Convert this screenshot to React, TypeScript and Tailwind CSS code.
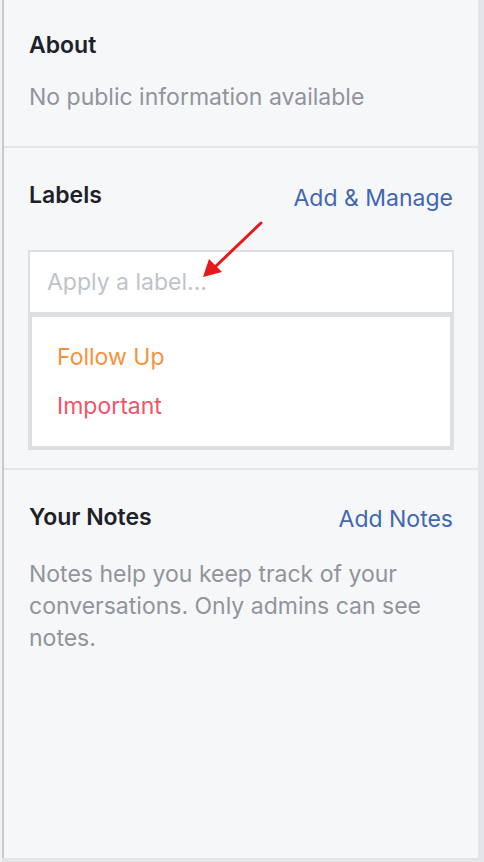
export default function App() {
  return (
    <div
      className="flex w-[484px] h-[862px] bg-[#e4e5e9] text-[23px]"
      style={{ fontFamily: "Inter, 'Noto Sans', sans-serif" }}
    >
      <div className="w-[2px] bg-[#f2f3f5]" />
      <div className="flex flex-col w-[476px] h-[858px] bg-[#f6f7f9] border-l-2 border-[#c9cacd]">
        {/* About */}
        <section className="px-[25px] pt-[33px] pb-[37px]">
          <h2 className="leading-6 font-semibold text-[#1d2129]">About</h2>
          <p className="mt-7 leading-6 text-[#90949c]">No public information available</p>
        </section>
        <div className="h-[2px] bg-[#e5e6e9]" />

        {/* Labels */}
        <section className="relative px-[25px] pt-[35px] pb-[18px]">
          <div className="flex items-start justify-between">
            <h2 className="leading-6 font-semibold text-[#1d2129]">Labels</h2>
            <a className="pt-[3px] leading-6 text-[#4267b2]">Add &amp; Manage</a>
          </div>
          <div className="-mx-[1px] mt-[40px]">
            <div className="flex items-center h-[63px] bg-white border-2 border-b-[1px] border-[#dddfe2] px-[17px]">
              <span className="text-[#bec3c9]">Apply a label...</span>
            </div>
            <div className="flex flex-col gap-[25px] bg-white border-4 border-[#dddfe2] px-[25px] py-7">
              <span className="leading-6 text-[#f7923b]">Follow Up</span>
              <span className="leading-6 text-[#f35369]">Important</span>
            </div>
          </div>
          <svg
            className="absolute left-[190px] top-[68px]"
            width="80"
            height="70"
            viewBox="0 0 80 70"
          >
            <line x1="67" y1="7" x2="21" y2="51" stroke="#e8181b" strokeWidth="3" strokeLinecap="round" />
            <polygon points="9,61 15,43 28,56" fill="#e8181b" />
          </svg>
        </section>
        <div className="h-[2px] bg-[#e5e6e9]" />

        {/* Notes */}
        <section className="px-[25px] pt-[35px]">
          <div className="flex items-start justify-between">
            <h2 className="leading-6 font-semibold text-[#1d2129]">Your Notes</h2>
            <a className="pt-[2px] leading-6 text-[#4267b2]">Add Notes</a>
          </div>
          <p className="mt-[27px] leading-8 text-[#90949c]">
            Notes help you keep track of your conversations. Only admins can see notes.
          </p>
        </section>
      </div>
    </div>
  );
}
